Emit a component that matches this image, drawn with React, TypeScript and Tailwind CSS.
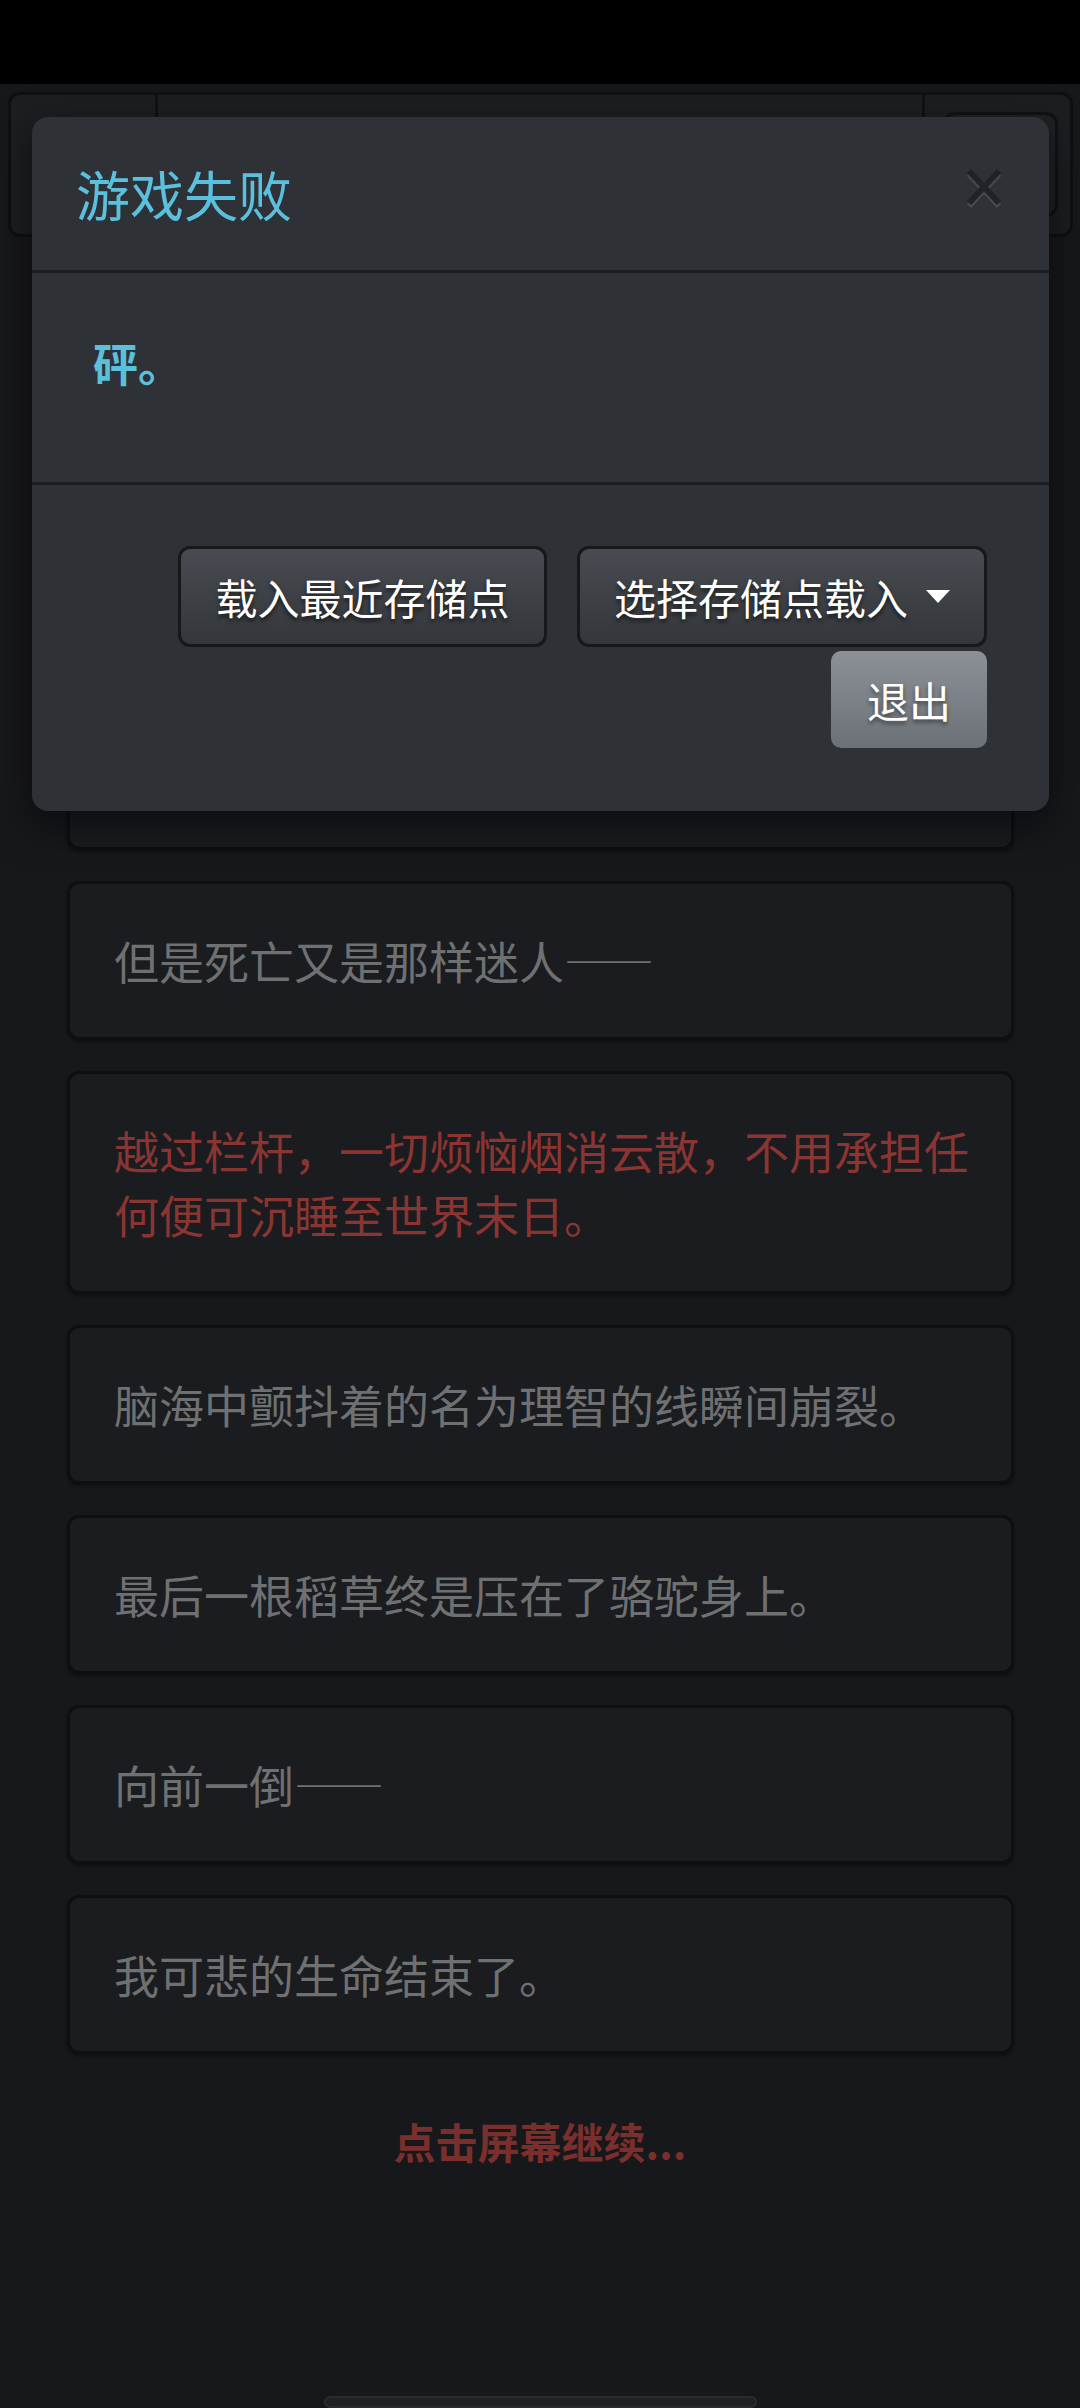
import React from "react";

const Dash = () => <span className="[font-feature-settings:'fwid']">——</span>;

const cards: { text: React.ReactNode; red?: boolean }[] = [
  { text: "\u00a0" },
  { text: "\u00a0" },
  { text: "\u00a0" },
  { text: <>但是死亡又是那样迷人<Dash /></> },
  { text: "越过栏杆，一切烦恼烟消云散，不用承担任何便可沉睡至世界末日。", red: true },
  { text: "脑海中颤抖着的名为理智的线瞬间崩裂。" },
  { text: "最后一根稻草终是压在了骆驼身上。" },
  { text: <>向前一倒<Dash /></> },
  { text: "我可悲的生命结束了。" },
];

function CloseIcon() {
  return (
    <svg width="38" height="42" viewBox="0 0 38 42" className="mb-[9px]">
      <g stroke="#464a4f" strokeWidth="6" strokeLinecap="butt">
        <line x1="4" y1="6" x2="34" y2="38" />
        <line x1="34" y1="6" x2="4" y2="38" />
      </g>
      <g stroke="#202327" strokeWidth="6" strokeLinecap="butt">
        <line x1="4" y1="3" x2="34" y2="35" />
        <line x1="34" y1="3" x2="4" y2="35" />
      </g>
    </svg>
  );
}

export default function App() {
  return (
    <div className="relative w-[1080px] h-[2408px] overflow-hidden bg-[#17181b] font-['Noto_Sans_CJK_SC','Noto_Sans',sans-serif]">
      {/* status bar */}
      <div className="h-[84px] bg-black" />

      {/* navbar (behind backdrop) */}
      <div className="mt-[8px] ml-[8px] mr-[7px] h-[145px] flex rounded-[12px] border-[3px] border-[#0f1012] bg-[#1c1e21]">
        <div className="w-[147px] border-r-[3px] border-[#111214]" />
        <div className="flex-1" />
        <div className="w-[148px] flex items-center justify-end pr-[12px] border-l-[3px] border-[#111214]">
          <div className="w-[115px] h-[105px] rounded-[12px] border-[3px] border-[#111214] bg-[#1f2124]" />
        </div>
      </div>

      {/* story cards */}
      <div className="ml-[67px] mr-[66px] pt-[74px] flex flex-col gap-[31px]">
        {cards.map((c, i) => (
          <div
            key={i}
            className="rounded-[12px] border-[3px] border-[#0e0f11] bg-[#1a1c1f] pl-[44px] pr-[36px] pt-[45px] pb-[44px] shadow-[0_2px_3px_rgba(0,0,0,0.35)]"
          >
            <p className={`text-[45px] leading-[64px] ${c.red ? "text-[#8a3531]" : "text-[#6f7072]"}`}>{c.text}</p>
          </div>
        ))}
      </div>

      <p className="mt-[55px] text-center text-[42px] leading-[64px] font-bold text-[#7b2f2c]">点击屏幕继续...</p>

      {/* modal */}
      <div className="absolute left-[32px] top-[117px] w-[1017px] rounded-[16px] bg-[#2e3236] shadow-[0_14px_40px_rgba(0,0,0,0.55)]">
        <div className="h-[156px] flex items-center justify-between pl-[44px] pr-[46px] border-b-[3px] border-[#1c1f22]">
          <h4 className="text-[54px] leading-none text-[#5bc0de]">游戏失败</h4>
          <CloseIcon />
        </div>
        <div className="pl-[61px] pt-[58px] pb-[87px] border-b-[3px] border-[#1c1f22]">
          <p className="text-[45px] leading-[64px] font-bold text-[#5bc0de]">砰。</p>
        </div>
        <div className="pt-[61px] pb-[63px] pr-[62px] flex flex-col items-end">
          <div className="flex gap-[30px]">
            <button className="w-[369px] h-[101px] flex items-center justify-center rounded-[12px] border-[3px] border-[#16181a] bg-linear-to-b from-[#484b51] to-[#33363a] text-white text-[42px] [text-shadow:0_3px_4px_rgba(0,0,0,0.6)]">
              载入最近存储点
            </button>
            <button className="w-[410px] h-[101px] flex items-center justify-center gap-[18px] rounded-[12px] border-[3px] border-[#16181a] bg-linear-to-b from-[#484b51] to-[#33363a] text-white text-[42px] [text-shadow:0_3px_4px_rgba(0,0,0,0.6)]">
              <span>选择存储点载入</span>
              <svg width="24" height="13" viewBox="0 0 24 13">
                <polygon points="0,0 24,0 12,13" fill="#ffffff" />
              </svg>
            </button>
          </div>
          <button className="mt-[4px] w-[156px] h-[97px] flex items-center justify-center rounded-[10px] bg-linear-to-b from-[#8c9197] to-[#6c7177] text-white text-[42px] [text-shadow:0_3px_4px_rgba(0,0,0,0.45)]">
            退出
          </button>
        </div>
      </div>

      {/* home indicator */}
      <div className="absolute left-[324px] top-[2396px] w-[433px] h-[12px] rounded-full border-[2px] border-[#2a2c2f] bg-[#1f2124]" />
    </div>
  );
}
